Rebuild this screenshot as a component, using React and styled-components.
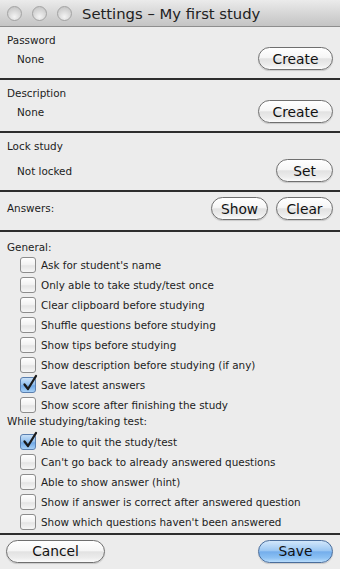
import React from "react";
import styled, { createGlobalStyle } from "styled-components";

const GlobalStyle = createGlobalStyle`
    html, body {
        margin: 0;
        padding: 0;
        background: #ececec;
    }
    body {
        font-family: "DejaVu Sans", Verdana, sans-serif;
        color: #1c1c1c;
    }
`;

const Window = styled.div`
    width: 340px;
    height: 569px;
    display: flex;
    flex-direction: column;
    background: #ececec;
    overflow: hidden;
`;

const TitleBar = styled.div`
    height: 27px;
    display: flex;
    align-items: center;
    padding-left: 7px;
    gap: 9px;
    background: linear-gradient(#ebebeb, #d3d3d3 60%, #c4c4c4);
    border-bottom: 1px solid #8e8e8e;
    box-sizing: border-box;
`;

const Light = styled.span`
    width: 15px;
    height: 15px;
    border-radius: 50%;
    box-sizing: border-box;
    border: 1px solid #a3a3a3;
    background: radial-gradient(circle at 50% 75%, #f4f4f4, #d6d6d6 55%, #bdbdbd);
`;

const Lights = styled.div`
    display: flex;
    gap: 10px;
`;

const Title = styled.div`
    font-size: 14.8px;
    color: #222;
    margin-left: 1px;
    white-space: nowrap;
`;

const Section = styled.div`
    padding: ${(p) => p.$pad || "7px 7px 8px 7px"};
    border-bottom: 2px solid #2e2e2e;
    display: flex;
    flex-direction: column;
    gap: ${(p) => p.$gap || 0}px;
`;

const Label = styled.div`
    font-size: 10.4px;
    line-height: 13px;
    height: 13px;
`;

const Row = styled.div`
    display: flex;
    align-items: center;
    justify-content: space-between;
`;

const Value = styled.span`
    font-size: 10.4px;
    padding-left: 10px;
`;

const Buttons = styled.div`
    display: flex;
    gap: 8px;
`;

const Button = styled.button`
    width: ${(p) => p.$w}px;
    height: 23px;
    border-radius: 12px;
    box-sizing: border-box;
    padding: 0;
    font-family: "DejaVu Sans", Verdana, sans-serif;
    font-size: 13.8px;
    color: #111;
    border: 1px solid ${(p) => (p.$primary ? "#4a6d9b" : "#6f6f6f")};
    background: ${(p) =>
        p.$primary
            ? "linear-gradient(#d2e7fb, #9dc8f3 45%, #74aeec 52%, #8cc1f3 80%, #b8dcfc)"
            : "linear-gradient(#ffffff, #f6f6f6 45%, #e2e2e2 52%, #ececec 80%, #fbfbfb)"};
    box-shadow: 0 1px 1px rgba(0, 0, 0, 0.15);
`;

const Options = styled.div`
    padding: 9px 7px 1px 7px;
    border-bottom: 2px solid #2e2e2e;
    flex: 1;
`;

const Heading = styled.div`
    font-size: 10.4px;
    line-height: 13px;
    margin-bottom: ${(p) => p.$after || 1}px;
`;

const Option = styled.label`
    height: 20px;
    display: flex;
    align-items: center;
    gap: 5px;
    padding-left: 13px;
    font-size: 10.4px;
`;

const Box = styled.span`
    position: relative;
    width: 16px;
    height: 16px;
    flex: none;
    box-sizing: border-box;
    border-radius: 3px;
    border: 1px solid ${(p) => (p.$on ? "#5b7fae" : "#8c8c8c")};
    background: ${(p) =>
        p.$on
            ? "linear-gradient(#c9e1f8, #8fbdec 50%, #6fa8e6 55%, #a8d1f7)"
            : "linear-gradient(#ffffff, #f1f1f1 50%, #e4e4e4 55%, #f6f6f6)"};
`;

const Tick = styled.svg`
    position: absolute;
    left: 1px;
    top: -4px;
`;

const Footer = styled.div`
    flex: 1;
    display: flex;
    align-items: center;
    justify-content: space-between;
    padding: 0 7px 2px 6px;
`;

const Check = ({ on }) => (
    <Box $on={on}>
        {on && (
            <Tick width="16" height="18" viewBox="0 0 16 18">
                <path d="M2.5 10.5 L6 15 L14 2" fill="none" stroke="#1a1a1a" strokeWidth="2.3" strokeLinecap="round" strokeLinejoin="round" />
            </Tick>
        )}
    </Box>
);

const general = [
    ["Ask for student's name", false],
    ["Only able to take study/test once", false],
    ["Clear clipboard before studying", false],
    ["Shuffle questions before studying", false],
    ["Show tips before studying", false],
    ["Show description before studying (if any)", false],
    ["Save latest answers", true],
    ["Show score after finishing the study", false],
];

const whileTaking = [
    ["Able to quit the study/test", true],
    ["Can't go back to already answered questions", false],
    ["Able to show answer (hint)", false],
    ["Show if answer is correct after answered question", false],
    ["Show which questions haven't been answered", false],
];

function App() {
    return (
        <Window>
            <GlobalStyle />
            <TitleBar>
                <Lights>
                    <Light />
                    <Light />
                    <Light />
                </Lights>
                <Title>Settings – My first study</Title>
            </TitleBar>

            <Section>
                <Label>Password</Label>
                <Row>
                    <Value>None</Value>
                    <Button $w={75}>Create</Button>
                </Row>
            </Section>

            <Section>
                <Label>Description</Label>
                <Row>
                    <Value>None</Value>
                    <Button $w={75}>Create</Button>
                </Row>
            </Section>

            <Section $gap={6}>
                <Label>Lock study</Label>
                <Row>
                    <Value>Not locked</Value>
                    <Button $w={57}>Set</Button>
                </Row>
            </Section>

            <Section $pad="5px 7px 10px 7px">
                <Row>
                    <Label>Answers:</Label>
                    <Buttons>
                        <Button $w={57}>Show</Button>
                        <Button $w={57}>Clear</Button>
                    </Buttons>
                </Row>
            </Section>

            <Options>
                <Heading>General:</Heading>
                {general.map(([text, on]) => (
                    <Option key={text}>
                        <Check on={on} />
                        {text}
                    </Option>
                ))}
                <Heading $after={4}>While studying/taking test:</Heading>
                {whileTaking.map(([text, on]) => (
                    <Option key={text}>
                        <Check on={on} />
                        {text}
                    </Option>
                ))}
            </Options>

            <Footer>
                <Button $w={99}>Cancel</Button>
                <Button $w={75} $primary>Save</Button>
            </Footer>
        </Window>
    );
}

export default App;
